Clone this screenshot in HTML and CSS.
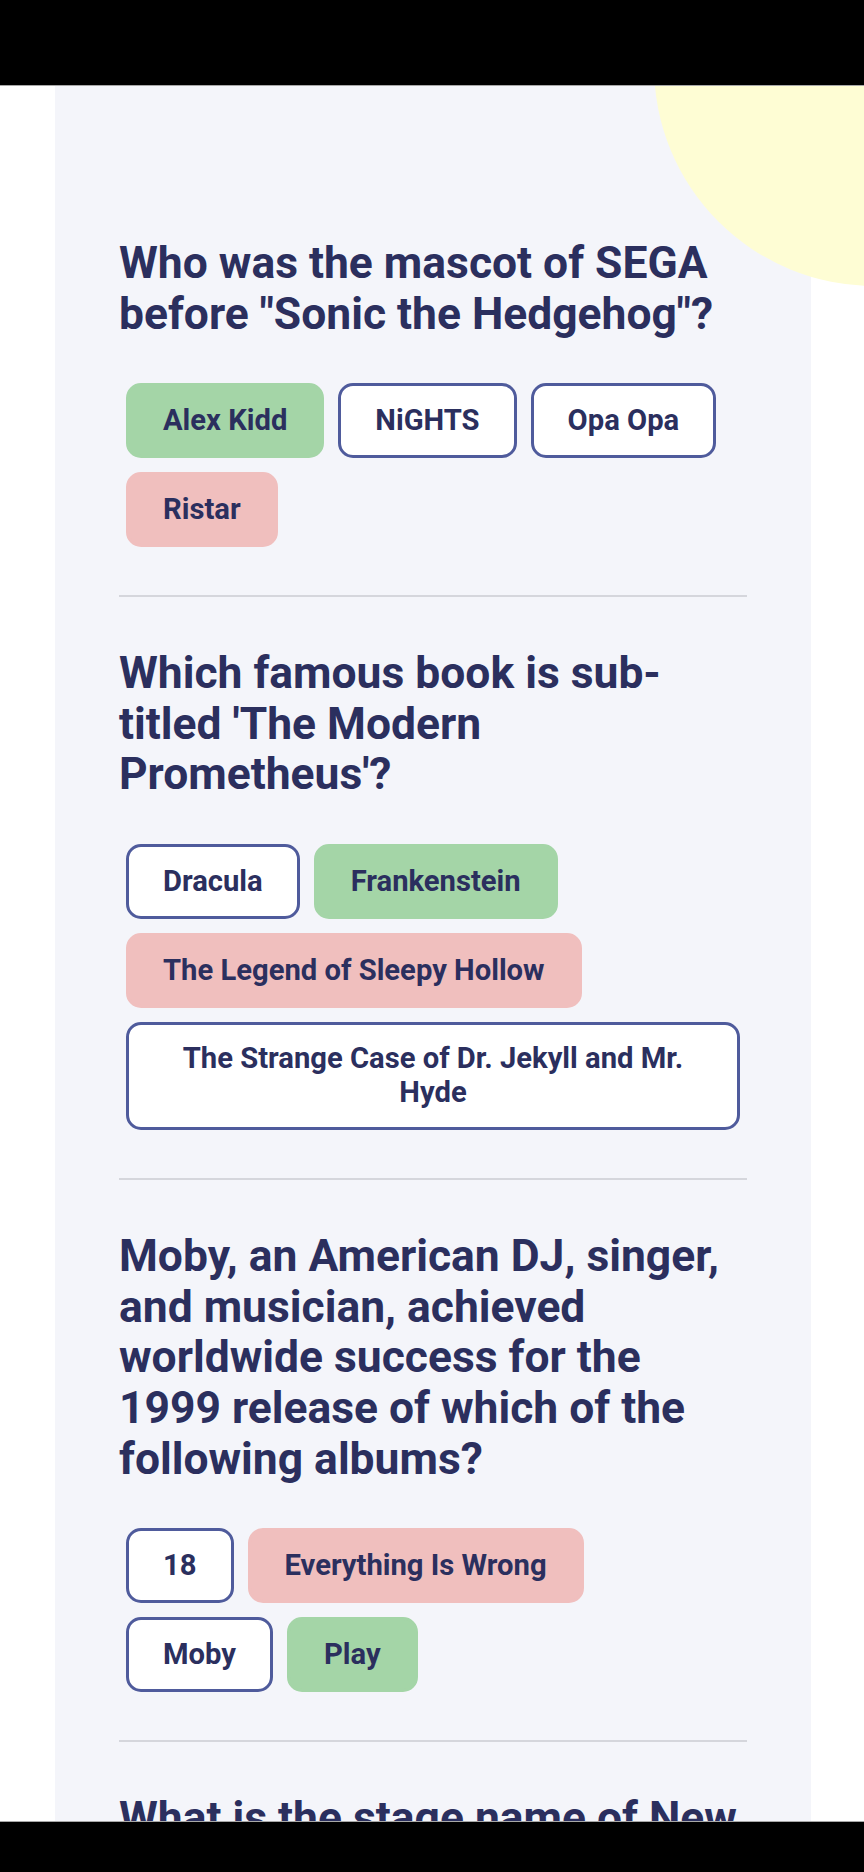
FILE: index.html
```html
<!DOCTYPE html>
<html lang="en">
<head>
<meta charset="utf-8">
<title>Quizzical</title>
<link rel="stylesheet" href="styles.css">
</head>
<body>
<div class="status-bar"></div>
<main class="page">
  <div class="blob"></div>
  <section class="quiz">
    <article class="question">
      <h2 class="question-title">Who was the mascot of SEGA before "Sonic the Hedgehog"?</h2>
      <div class="answers">
        <button class="answer answer--correct">Alex Kidd</button>
        <button class="answer">NiGHTS</button>
        <button class="answer">Opa Opa</button>
        <button class="answer answer--wrong">Ristar</button>
      </div>
    </article>
    <hr class="divider">
    <article class="question">
      <h2 class="question-title">Which famous book is sub-titled 'The Modern Prometheus'?</h2>
      <div class="answers">
        <button class="answer">Dracula</button>
        <button class="answer answer--correct">Frankenstein</button>
        <button class="answer answer--wrong">The Legend of Sleepy Hollow</button>
        <button class="answer">The Strange Case of Dr. Jekyll and Mr. Hyde</button>
      </div>
    </article>
    <hr class="divider">
    <article class="question">
      <h2 class="question-title">Moby, an American DJ, singer, and musician, achieved worldwide success for the 1999 release of which of the following albums?</h2>
      <div class="answers">
        <button class="answer">18</button>
        <button class="answer answer--wrong">Everything Is Wrong</button>
        <button class="answer">Moby</button>
        <button class="answer answer--correct">Play</button>
      </div>
    </article>
    <hr class="divider">
    <article class="question">
      <h2 class="question-title">What is the stage name of New Zealand-born singer songwriter Ella Marija Lani Yelich-O'Connor?</h2>
      <div class="answers">
        <button class="answer">Kimbra</button>
        <button class="answer answer--correct">Lorde</button>
        <button class="answer">Ladyhawke</button>
        <button class="answer">Gin Wigmore</button>
      </div>
    </article>
  </section>
</main>
<div class="nav-bar"></div>
</body>
</html>
```
FILE: styles.css
```css
* {
  box-sizing: border-box;
}

html, body {
  margin: 0;
  padding: 0;
  background: #ffffff;
}

body {
  font-family: Roboto, "Liberation Sans", Arial, sans-serif;
  color: #2b2f5e;
}

.status-bar {
  position: relative;
  z-index: 5;
  height: 86px;
  background: #000000;
  border-bottom: 1px solid #a7a7a7;
}

.nav-bar {
  position: fixed;
  left: 0;
  right: 0;
  bottom: 0;
  z-index: 5;
  height: 51px;
  background: #000000;
  border-top: 1px solid #a7a7a7;
}

.page {
  position: relative;
  overflow: hidden;
  min-height: 1800px;
}

.blob {
  position: absolute;
  z-index: 2;
  left: 654px;
  top: -240px;
  width: 440px;
  height: 440px;
  border-radius: 50%;
  background: #fefdd4;
}

.quiz {
  position: relative;
  z-index: 1;
  width: 756px;
  margin-left: 55px;
  padding: 152px 64px 40px;
  background: #f4f5fa;
}

.question {
  padding-bottom: 48.5px;
}

.divider + .question {
  padding-top: 51px;
}

.question-title {
  margin: 0 0 44px;
  font-size: 44.4px;
  line-height: 50.6px;
  font-weight: 700;
  color: #2b2f5e;
}

.answers {
  display: flex;
  flex-wrap: wrap;
  gap: 14px;
  padding: 0 7px;
}

.answer {
  font-family: Roboto, "Liberation Sans", Arial, sans-serif;
  font-size: 29.2px;
  line-height: 33.4px;
  font-weight: 700;
  color: #2b2f5e;
  background: #ffffff;
  border: 3px solid #4f5b9c;
  border-radius: 15px;
  padding: 17.7px 34px;
  max-width: 100%;
  text-align: center;
}

.answer--correct {
  background: #a4d5a7;
  border-color: #a4d5a7;
}

.answer--wrong {
  background: #f0bfbe;
  border-color: #f0bfbe;
}

.divider {
  margin: 0;
  border: 0;
  height: 2px;
  background: #d5d6dc;
}
```
